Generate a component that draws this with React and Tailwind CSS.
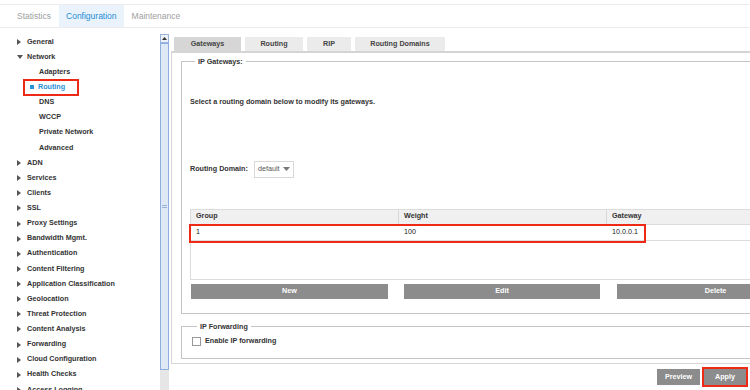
import React from 'react';

const tree = [
  { label: 'General', kind: 'closed' },
  { label: 'Network', kind: 'open' },
  { label: 'Adapters', kind: 'child' },
  { label: 'Routing', kind: 'active' },
  { label: 'DNS', kind: 'child' },
  { label: 'WCCP', kind: 'child' },
  { label: 'Private Network', kind: 'child' },
  { label: 'Advanced', kind: 'child' },
  { label: 'ADN', kind: 'closed' },
  { label: 'Services', kind: 'closed' },
  { label: 'Clients', kind: 'closed' },
  { label: 'SSL', kind: 'closed' },
  { label: 'Proxy Settings', kind: 'closed' },
  { label: 'Bandwidth Mgmt.', kind: 'closed' },
  { label: 'Authentication', kind: 'closed' },
  { label: 'Content Filtering', kind: 'closed' },
  { label: 'Application Classification', kind: 'closed' },
  { label: 'Geolocation', kind: 'closed' },
  { label: 'Threat Protection', kind: 'closed' },
  { label: 'Content Analysis', kind: 'closed' },
  { label: 'Forwarding', kind: 'closed' },
  { label: 'Cloud Configuration', kind: 'closed' },
  { label: 'Health Checks', kind: 'closed' },
  { label: 'Access Logging', kind: 'closed' },
];

const TreeRow = ({ item }) => {
  if (item.kind === 'active') {
    return (
      <div className="h-[15.13px] flex items-center">
        <div className="ml-[23px] h-[17px] w-[56px] border-[2.5px] border-[#ee2a16] flex items-center">
          <span className="ml-[5px] w-[4px] h-[4px] bg-[#2a90d8]" />
          <span className="ml-[4px] text-[#2a90d8]">{item.label}</span>
        </div>
      </div>
    );
  }
  if (item.kind === 'child') {
    return (
      <div className="h-[15.13px] flex items-center pl-[39px]">{item.label}</div>
    );
  }
  return (
    <div className="h-[15.13px] flex items-center">
      <div className="w-[27px] flex items-center pl-[17px]">
        {item.kind === 'open' ? (
          <svg width="6" height="4" viewBox="0 0 6 4"><path d="M0 0h6L3 4z" fill="#555" /></svg>
        ) : (
          <svg width="4" height="6" viewBox="0 0 4 6"><path d="M0 0l4 3-4 3z" fill="#555" /></svg>
        )}
      </div>
      <span>{item.label}</span>
    </div>
  );
};

const GrayButton = ({ children, className = '' }) => (
  <div className={`h-[15px] bg-[#8c8c8c] text-white font-bold flex items-center justify-center ${className}`}>
    {children}
  </div>
);

export default function App() {
  return (
    <div className="w-[750px] h-[390px] overflow-hidden bg-white text-[7.2px] text-[#333] font-['Liberation_Sans',Arial,sans-serif]">
      {/* top tabs */}
      <div className="h-[4px]" />
      <div className="h-[24px] border-t border-b border-[#ececec] flex text-[8.5px] text-[#a0a0a0]">
        <div className="pl-[17px] pr-[8px] flex items-center">Statistics</div>
        <div className="px-[7px] bg-[#eaf3fb] text-[#1f8dd6] flex items-center">Configuration</div>
        <div className="pl-[8px] flex items-center">Maintenance</div>
      </div>

      <div className="flex h-[362px]">
        {/* tree */}
        <div className="w-[160px] flex-none pt-[6.5px] font-bold">
          {tree.map((item) => (
            <TreeRow key={item.label} item={item} />
          ))}
        </div>

        {/* scrollbar */}
        <div className="w-[9px] flex-none mt-[6px] flex flex-col">
          <div className="h-[9px] border border-[#9ab4dc] bg-[#eef2f8] flex items-center justify-center">
            <svg width="5" height="3" viewBox="0 0 5 3"><path d="M0 3h5L2.5 0z" fill="#333" /></svg>
          </div>
          <div className="h-[334px] border border-[#8eaee0] bg-[#dfe8f5] flex flex-col items-center justify-center">
            <div className="w-[5px] h-[3px] border-t border-b border-[#9ab0d8]" />
          </div>
          <div className="h-[20px] bg-[#e6e6e6]" />
        </div>

        {/* content panel */}
        <div className="ml-[2px] w-[660px] flex-none mt-[9px]">
          <div className="flex gap-[4px] pl-[3px] h-[14px] font-bold text-[#444]">
            <div className="w-[67px] bg-[#d6d6d6] flex items-center justify-center">Gateways</div>
            <div className="w-[58px] bg-[#ebebeb] flex items-center justify-center">Routing</div>
            <div className="w-[44px] bg-[#ebebeb] flex items-center justify-center">RIP</div>
            <div className="w-[90px] bg-[#ebebeb] flex items-center justify-center">Routing Domains</div>
          </div>
          <div className="h-[2px] bg-[#d4d4d4]" />
          <div className="border-l border-b border-[#d6d6d6] h-[311px] pl-[9px] pt-[4px] pr-[10px]">
            {/* IP Gateways */}
            <fieldset className="border border-[#c4c4c4] h-[257px] pl-[8px]">
              <legend className="ml-[5px] px-[3px] font-bold leading-[9px]">IP Gateways:</legend>
              <div className="mt-[31px] font-bold">Select a routing domain below to modify its gateways.</div>
              <div className="mt-[53px] flex items-center font-bold">
                <span>Routing Domain:</span>
                <div className="ml-[6px] h-[17px] w-[40px] border border-[#d8d8d8] flex items-center pl-[3px] font-normal text-[#555]">
                  default
                  <svg className="ml-[4px]" width="7" height="4" viewBox="0 0 7 4"><path d="M0 0h7L3.5 4z" fill="#777" /></svg>
                </div>
              </div>
              <div className="mt-[31px] w-[624px] h-[71px] border border-[#dcdcdc] relative">
                <div className="h-[15px] bg-[#f0f0f0] border-b border-[#dcdcdc] flex font-bold">
                  <div className="w-[208px] pl-[5px] flex items-center border-r border-[#d8d8d8]">Group</div>
                  <div className="w-[208px] pl-[5px] flex items-center border-r border-[#d8d8d8]">Weight</div>
                  <div className="flex-1 pl-[5px] flex items-center">Gateway</div>
                </div>
                <div className="h-[16px] border-b border-[#dcdcdc] flex text-[#222]">
                  <div className="w-[208px] pl-[5px] flex items-center">1</div>
                  <div className="w-[208px] pl-[5px] flex items-center">100</div>
                  <div className="flex-1 pl-[5px] flex items-center">10.0.0.1</div>
                </div>
                <div className="absolute left-[-2px] top-[14px] w-[457px] h-[19px] border-[2.5px] border-[#ee2a16]" />
              </div>
              <div className="mt-[4px] flex">
                <GrayButton className="w-[197px] ml-[1px]">New</GrayButton>
                <GrayButton className="w-[196px] ml-[16px]">Edit</GrayButton>
                <GrayButton className="w-[197px] ml-[17px]">Delete</GrayButton>
              </div>
            </fieldset>

            {/* IP Forwarding */}
            <fieldset className="mt-[8px] border border-[#c4c4c4] h-[37px] pl-[10px]">
              <legend className="ml-[5px] px-[3px] font-bold leading-[9px]">IP Forwarding</legend>
              <div className="mt-[5px] flex items-center font-bold">
                <div className="w-[9px] h-[9px] border border-[#999] bg-white" />
                <span className="ml-[4px]">Enable IP forwarding</span>
              </div>
            </fieldset>
          </div>

          {/* footer buttons */}
          <div className="mt-[3px] ml-[486px] flex items-center">
            <GrayButton className="w-[43px] h-[16px]">Preview</GrayButton>
            <div className="ml-[2px] border-[2.5px] border-[#ee2a16]">
              <GrayButton className="w-[42px] h-[16px]">Apply</GrayButton>
            </div>
          </div>
        </div>
      </div>
    </div>
  );
}
